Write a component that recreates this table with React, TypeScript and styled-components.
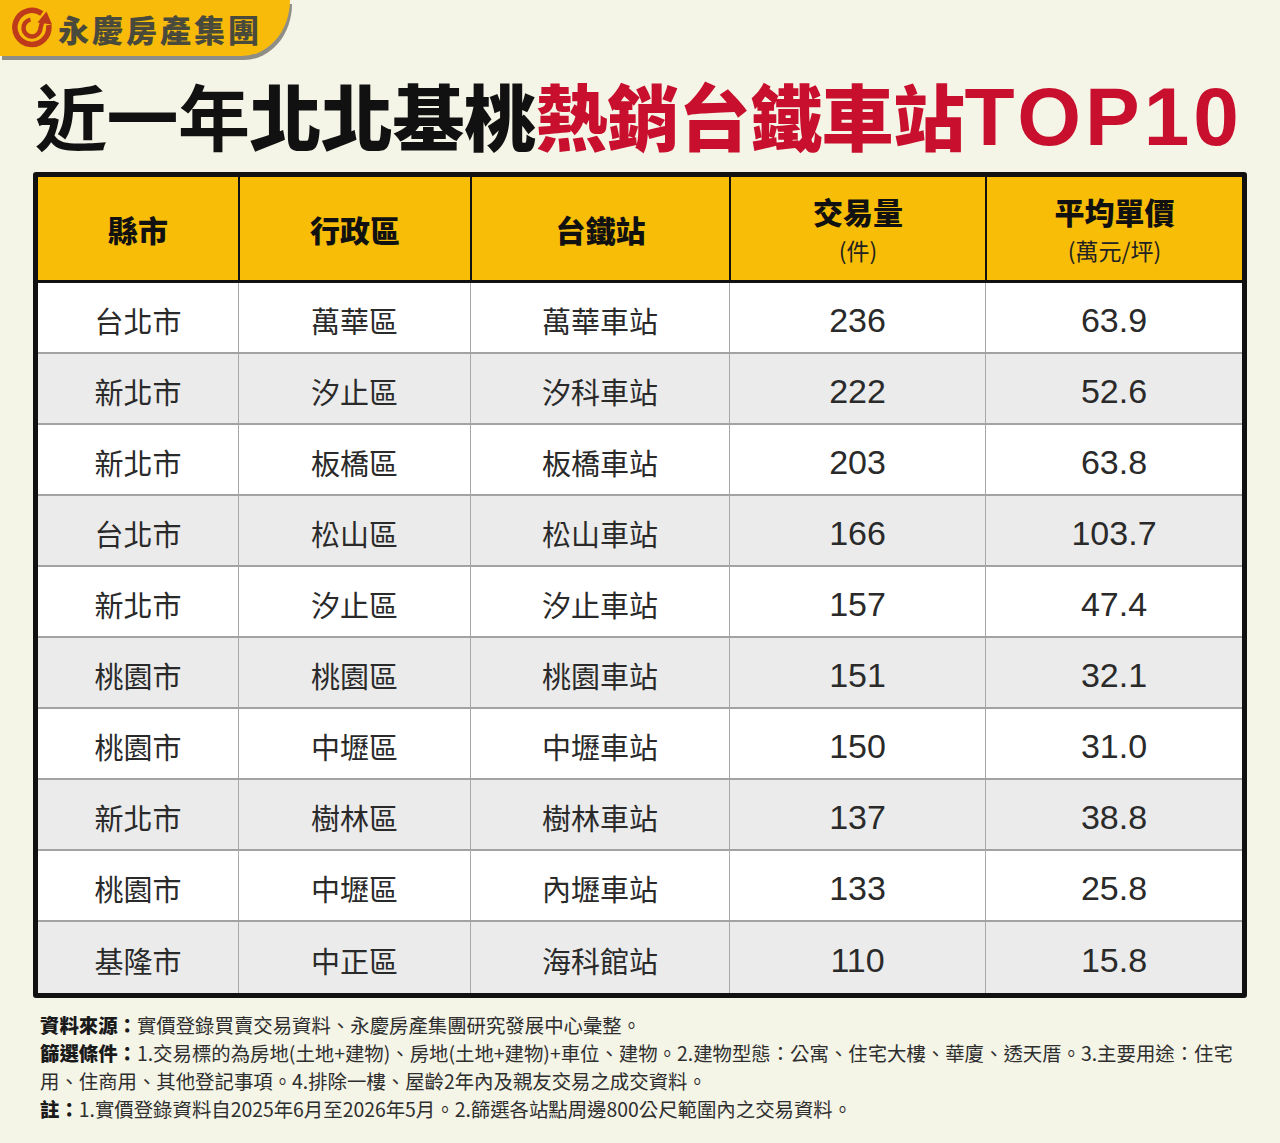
import styled, { createGlobalStyle } from 'styled-components';

const GlobalStyle = createGlobalStyle`
  html, body {
    margin: 0;
    padding: 0;
    background: #f4f4e7;
  }
  body {
    font-family: 'Noto Sans CJK TC', 'Noto Sans', sans-serif;
  }
`;

const Page = styled.div`
  width: 1280px;
  height: 1143px;
  background: #f4f4e7;
  display: flex;
  flex-direction: column;
  overflow: hidden;
`;

const Banner = styled.div`
  width: 290px;
  height: 56px;
  background: #f8bb0a;
  border-bottom-right-radius: 48px 56px;
  box-shadow: 2px 4px 0 #8e8e86;
  display: flex;
  align-items: center;
  padding-left: 10px;
  box-sizing: border-box;
  gap: 4px;
`;

const BrandName = styled.span`
  font-family: 'Noto Sans CJK TC', sans-serif;
  font-weight: 900;
  font-size: 31px;
  letter-spacing: 3px;
  color: #4a4a3c;
  line-height: 1;
`;

const Title = styled.h1`
  margin: 22px 0 0 35px;
  height: 94px;
  font-family: 'Noto Sans CJK TC', sans-serif;
  font-size: 72px;
  line-height: 72px;
  white-space: nowrap;
  letter-spacing: -0.5px;
  color: #111;
`;

const TitlePart = styled.span<{ $weight: number; $red?: boolean }>`
  font-weight: ${(p) => p.$weight};
  color: ${(p) => (p.$red ? '#c8102e' : '#111')};
`;

const Latin = styled.span`
  font-family: 'Liberation Sans', Arial, sans-serif;
  font-weight: 700;
  font-size: 82px;
  letter-spacing: 4px;
`;

const Table = styled.div`
  margin-left: 33px;
  width: 1214px;
  border: 5px solid #111;
  border-radius: 3px;
  box-sizing: border-box;
  background: #fff;
`;

const cols = '200px 232px 259px 256px 1fr';

const HeadRow = styled.div`
  display: grid;
  grid-template-columns: ${cols};
  height: 106px;
  background: #f8bd07;
  border-bottom: 3px solid #111;
  box-sizing: border-box;
`;

const HeadCell = styled.div<{ $first?: boolean }>`
  display: flex;
  flex-direction: column;
  align-items: center;
  justify-content: center;
  gap: 8px;
  border-left: ${(p) => (p.$first ? 'none' : '2px solid #111')};
  color: #111;
`;

const HeadMain = styled.div`
  font-weight: 900;
  font-size: 30px;
  line-height: 34px;
  height: 34px;
`;

const HeadSub = styled.div`
  font-weight: 400;
  font-size: 23px;
  line-height: 28px;
  height: 28px;
  color: #222;
`;

const Row = styled.div<{ $alt: boolean; $last: boolean }>`
  display: grid;
  grid-template-columns: ${cols};
  height: 71px;
  background: ${(p) => (p.$alt ? '#ebebeb' : '#ffffff')};
  border-bottom: ${(p) => (p.$last ? 'none' : '2px solid #a3a3a3')};
  box-sizing: border-box;
`;

const Cell = styled.div<{ $first?: boolean; $num?: boolean }>`
  display: flex;
  align-items: center;
  justify-content: center;
  padding-top: ${(p) => (p.$num ? '6px' : '4px')};
  border-left: ${(p) => (p.$first ? 'none' : '1px solid #a8a8a8')};
  font-family: ${(p) =>
    p.$num
      ? "'Liberation Sans', Arial, sans-serif"
      : "'Noto Sans CJK TC', sans-serif"};
  font-size: ${(p) => (p.$num ? '34px' : '29px')};
  color: #2a2a2a;
`;

const Notes = styled.div`
  margin: 13px 0 0 40px;
  font-family: 'Noto Sans CJK TC', sans-serif;
  font-size: 19.4px;
  line-height: 28px;
  white-space: nowrap;
  color: #2e2e2e;
`;

const NoteLabel = styled.b`
  font-weight: 900;
  color: #1a1a1a;
`;

const Logo = () => (
  <svg width="44" height="44" viewBox="0 0 44 44">
    <path
      d="M31.8 7.6 A17 17 0 1 0 38.7 19"
      fill="none"
      stroke="#bd3a1b"
      strokeWidth="5.5"
    />
    <path
      d="M20.5 13.6 A8.5 8.5 0 1 0 30.5 22 L 32.5 15"
      fill="none"
      stroke="#bd3a1b"
      strokeWidth="4.5"
    />
    <path d="M27.5 16.5 L36.5 5.5 L42 18.5 Z" fill="#bd3a1b" />
  </svg>
);

const rows = [
  ['台北市', '萬華區', '萬華車站', '236', '63.9'],
  ['新北市', '汐止區', '汐科車站', '222', '52.6'],
  ['新北市', '板橋區', '板橋車站', '203', '63.8'],
  ['台北市', '松山區', '松山車站', '166', '103.7'],
  ['新北市', '汐止區', '汐止車站', '157', '47.4'],
  ['桃園市', '桃園區', '桃園車站', '151', '32.1'],
  ['桃園市', '中壢區', '中壢車站', '150', '31.0'],
  ['新北市', '樹林區', '樹林車站', '137', '38.8'],
  ['桃園市', '中壢區', '內壢車站', '133', '25.8'],
  ['基隆市', '中正區', '海科館站', '110', '15.8'],
];

const App = () => {
  const body = rows.map((r, i) => (
    <Row key={i} $alt={i % 2 === 1} $last={i === rows.length - 1}>
      <Cell $first>{r[0]}</Cell>
      <Cell>{r[1]}</Cell>
      <Cell>{r[2]}</Cell>
      <Cell $num>{r[3]}</Cell>
      <Cell $num>{r[4]}</Cell>
    </Row>
  ));

  return (
    <Page>
      <GlobalStyle />
      <Banner>
        <Logo />
        <BrandName>永慶房產集團</BrandName>
      </Banner>
      <Title>
        <TitlePart $weight={700}>近一年</TitlePart>
        <TitlePart $weight={900}>北北基桃</TitlePart>
        <TitlePart $weight={900} $red>
          熱銷台鐵車站<Latin>TOP10</Latin>
        </TitlePart>
      </Title>
      <Table>
        <HeadRow>
          <HeadCell $first>
            <HeadMain>縣市</HeadMain>
          </HeadCell>
          <HeadCell>
            <HeadMain>行政區</HeadMain>
          </HeadCell>
          <HeadCell>
            <HeadMain>台鐵站</HeadMain>
          </HeadCell>
          <HeadCell>
            <HeadMain>交易量</HeadMain>
            <HeadSub>(件)</HeadSub>
          </HeadCell>
          <HeadCell>
            <HeadMain>平均單價</HeadMain>
            <HeadSub>(萬元/坪)</HeadSub>
          </HeadCell>
        </HeadRow>
        {body}
      </Table>
      <Notes>
        <div>
          <NoteLabel>資料來源：</NoteLabel>實價登錄買賣交易資料、永慶房產集團研究發展中心彙整。
        </div>
        <div>
          <NoteLabel>篩選條件：</NoteLabel>1.交易標的為房地(土地+建物)、房地(土地+建物)+車位、建物。2.建物型態：公寓、住宅大樓、華廈、透天厝。3.主要用途：住宅
          <br />
          用、住商用、其他登記事項。4.排除一樓、屋齡2年內及親友交易之成交資料。
        </div>
        <div>
          <NoteLabel>註：</NoteLabel>1.實價登錄資料自2025年6月至2026年5月。2.篩選各站點周邊800公尺範圍內之交易資料。
        </div>
      </Notes>
    </Page>
  );
};

export default App;
